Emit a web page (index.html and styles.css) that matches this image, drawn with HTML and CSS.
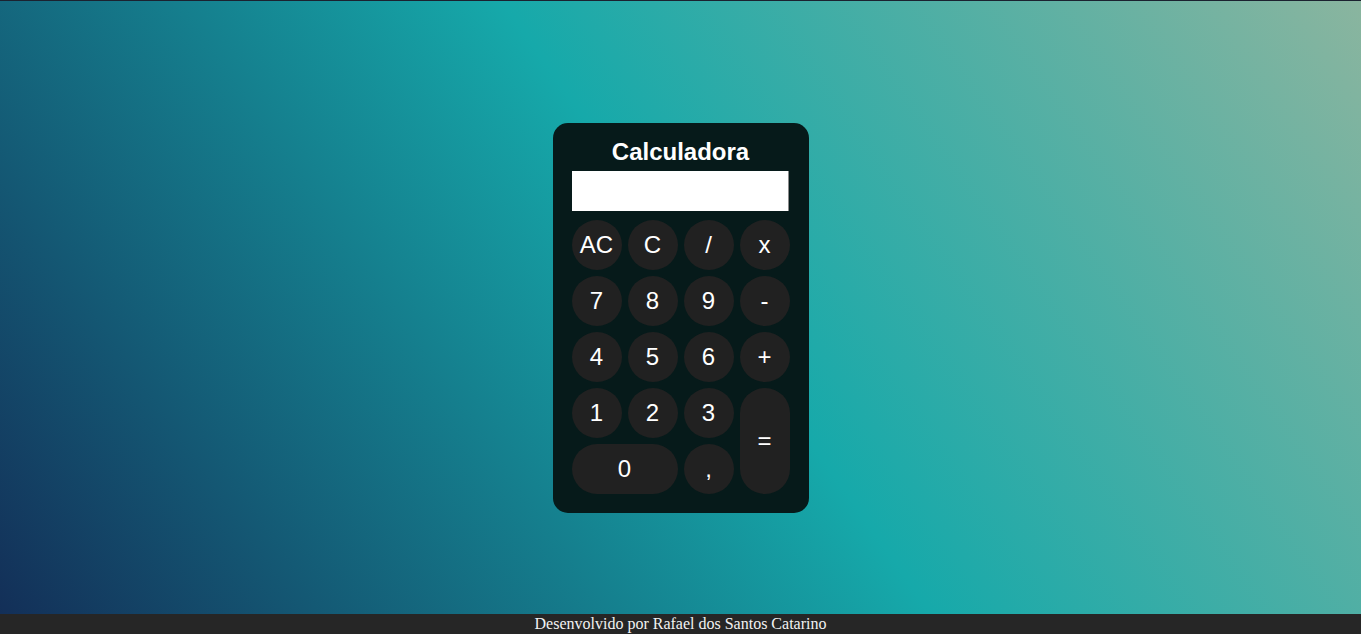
FILE: index.html
```html
<!DOCTYPE html>
<html lang="pt-BR">
<head>
<meta charset="utf-8">
<title>Calculadora</title>
<link rel="stylesheet" href="styles.css">
</head>
<body>
<main class="stage">
  <div class="calc">
    <h1 class="calc-title">Calculadora</h1>
    <input class="calc-display" type="text" readonly>
    <div class="keys">
      <button class="key">AC</button>
      <button class="key">C</button>
      <button class="key">/</button>
      <button class="key">x</button>
      <button class="key">7</button>
      <button class="key">8</button>
      <button class="key">9</button>
      <button class="key">-</button>
      <button class="key">4</button>
      <button class="key">5</button>
      <button class="key">6</button>
      <button class="key">+</button>
      <button class="key">1</button>
      <button class="key">2</button>
      <button class="key">3</button>
      <button class="key key-eq">=</button>
      <button class="key key-zero">0</button>
      <button class="key">,</button>
    </div>
  </div>
</main>
<footer class="footer">Desenvolvido por Rafael dos Santos Catarino</footer>
</body>
</html>
```
FILE: styles.css
```css
html, body {
  margin: 0;
  padding: 0;
  height: 100%;
}
body {
  display: flex;
  flex-direction: column;
  min-height: 100vh;
  font-family: "Liberation Sans", Arial, sans-serif;
}
.stage {
  flex: 1;
  display: flex;
  justify-content: center;
  align-items: flex-start;
  padding-top: 122px;
  border-top: 1px solid #1b2230;
  background: linear-gradient(55deg, #132f58 0%, #16a9aa 52%, #8ab59f 100%);
}
.calc {
  width: 256px;
  box-sizing: border-box;
  padding: 15px 19px 19px 19px;
  background: #061a1a;
  border-radius: 15px;
  display: flex;
  flex-direction: column;
  align-items: flex-start;
}
.calc-title {
  align-self: stretch;
  margin: 0 0 5px 0;
  text-align: center;
  color: #fff;
  font-size: 24px;
  font-weight: bold;
  line-height: 28px;
}
.calc-display {
  width: 217px;
  height: 40px;
  box-sizing: border-box;
  margin: 0 0 9px 0;
  padding: 0;
  border: none;
  border-right: 1px solid #8a8a8a;
  background: #fff;
  outline: none;
}
.keys {
  display: grid;
  grid-template-columns: repeat(4, 50px);
  grid-auto-rows: 50px;
  gap: 6px;
}
.key {
  margin: 0;
  padding: 0;
  border: none;
  border-radius: 25px;
  background: #212121;
  color: #fff;
  font-family: "Liberation Sans", Arial, sans-serif;
  font-size: 24px;
  cursor: pointer;
}
.key-eq {
  grid-column: 4;
  grid-row: 4 / span 2;
}
.key-zero {
  grid-column: 1 / span 2;
}
.footer {
  height: 20px;
  line-height: 20px;
  background: #262626;
  color: #f2f2f2;
  text-align: center;
  font-family: "Liberation Serif", "Times New Roman", serif;
  font-size: 16px;
}
```
